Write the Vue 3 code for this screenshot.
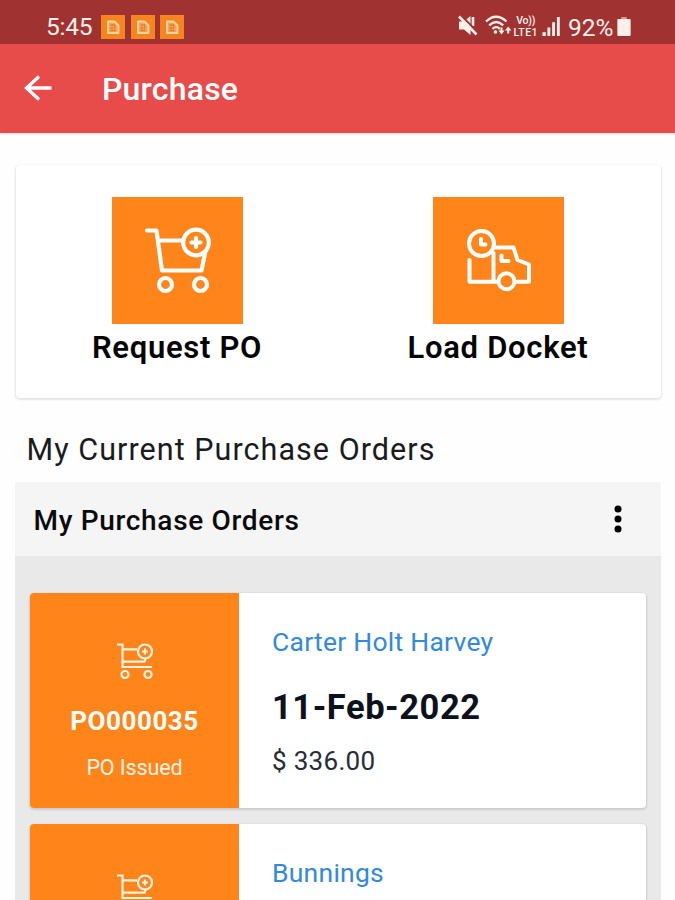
<script setup>
const actions = [
  { label: 'Request PO', icon: 'cart' },
  { label: 'Load Docket', icon: 'truck' },
]
const orders = [
  { number: 'PO000035', status: 'PO Issued', supplier: 'Carter Holt Harvey', date: '11-Feb-2022', amount: '$ 336.00' },
  { number: '', status: '', supplier: 'Bunnings', date: '', amount: '' },
]
</script>

<template>
  <div class="screen">
    <div class="status">
      <span class="clock">5:45</span>
      <div class="notes">
        <svg v-for="n in 3" :key="n" class="note" viewBox="0 0 24 24">
          <rect width="24" height="24" fill="#f5851f" />
          <path d="M7 6.500h6.500l4 4V18H7z" fill="#f5a45c" stroke="#ffd3a0" stroke-width="1.800" stroke-linejoin="round" />
          <path d="M9.500 10h3M9.500 13h2.500M9.500 15.500h5M13.500 9v5" fill="none" stroke="#e97c1c" stroke-width="1.300" />
        </svg>
      </div>
      <div class="system">
        <svg class="mute" viewBox="0 0 20 21">
          <path d="M1 6.500h5L12.500 1v19L6 14.500H1z" fill="#fff0ea" />
          <path d="M15 2v9" stroke="#fff0ea" stroke-width="2.600" />
          <path d="M2.500 0l18 18" stroke="#a13232" stroke-width="2.200" />
          <path d="M1 1.500l17.500 18" stroke="#fff0ea" stroke-width="2.600" />
        </svg>
        <svg class="wifi" viewBox="0 0 27 21">
          <g fill="none" stroke="#fff0ea" stroke-width="2.300">
            <path d="M1 6.500q10-9.500 20.500 0M4.200 10.300q7-6.600 14 0M7.500 13.800q3.700-3.400 7.400 0" />
          </g>
          <circle cx="10.500" cy="17" r="1.800" fill="#fff0ea" />
          <path d="M13.500 15.500h2v-3h2v3h2l-3 4zM20 15.500l3.200-3.900 3.200 3.900h-2.200v3h-2v-3z" fill="#fff0ea" />
        </svg>
        <div class="lte"><span class="vo">Vo))</span><span>LTE1</span></div>
        <svg class="signal" viewBox="0 0 19 20">
          <path d="M0 16h3.500v4H0zM5.200 11h3v9h-3zM10.200 5.500h3V20h-3zM15.200 0h3v20h-3z" fill="#fff0ea" />
        </svg>
        <span class="percent">92%</span>
        <svg class="battery" viewBox="0 0 14 20">
          <path d="M4 0h6v2H4z" fill="#d99a94" /><rect y="2" width="14" height="18" rx="1" fill="#fff0ea" />
        </svg>
      </div>
    </div>

    <header class="bar">
      <svg class="back" viewBox="0 0 28 26">
        <path d="M27.500 13H3M15 1.500L2.500 13 15 24.500" fill="none" stroke="#fff" stroke-width="3.300" />
      </svg>
      <h1>Purchase</h1>
    </header>

    <main>
      <section class="actions">
        <div v-for="a in actions" :key="a.label" class="action">
          <div class="tile">
            <svg v-if="a.icon === 'cart'" viewBox="0 0 131 127">
              <g fill="none" stroke="#fff" stroke-width="4.200" stroke-linecap="round" stroke-linejoin="round">
                <path d="M35 33.500h9.500L50 73.500h39.500L93.500 54M46 43.500h24" />
                <circle cx="84" cy="45.500" r="12.800" />
                <path d="M84 41v9M79.500 45.500h9" />
                <circle cx="53.500" cy="87.500" r="6.500" />
                <circle cx="88.500" cy="87.500" r="6.500" />
              </g>
            </svg>
            <svg v-else viewBox="0 0 131 127">
              <g fill="none" stroke="#fff" stroke-width="4" stroke-linejoin="round" stroke-linecap="round">
                <circle cx="48.500" cy="46.500" r="12.500" />
                <path d="M48 42v5.500h4.500" />
                <path d="M36.500 63v21.800h28M60.500 56v28M61 50.500h19.500L84.500 63l11.500 4.500v17.300H82" />
                <path d="M68.500 58.500v5.500h7" />
                <circle cx="73.500" cy="84.300" r="8" />
              </g>
            </svg>
          </div>
          <span class="label">{{ a.label }}</span>
        </div>
      </section>

      <h2>My Current Purchase Orders</h2>

      <section class="panel">
        <div class="panel-head">
          <h3>My Purchase Orders</h3>
          <svg class="more" viewBox="0 0 8 28">
            <circle cx="4" cy="4" r="3.500" /><circle cx="4" cy="14" r="3.500" /><circle cx="4" cy="24" r="3.500" />
          </svg>
        </div>
        <div class="list">
          <article v-for="o in orders" :key="o.supplier" class="order">
            <div class="badge">
              <svg class="cart" viewBox="0 0 36 36">
                <g fill="none" stroke="#fff3e4" stroke-width="2.200">
                  <path d="M0 1.500h5.500V24H35M6 6.300h14M6 18.700h21.500l1.500-4" />
                  <circle cx="28" cy="8.500" r="7" />
                  <path d="M28 5.500v6M25 8.500h6" />
                  <circle cx="8" cy="31.500" r="3.500" />
                  <circle cx="31" cy="31.500" r="3.500" />
                </g>
              </svg>
              <strong>{{ o.number }}</strong>
              <span class="state">{{ o.status }}</span>
            </div>
            <div class="details">
              <span class="supplier">{{ o.supplier }}</span>
              <span class="date">{{ o.date }}</span>
              <span class="amount">{{ o.amount }}</span>
            </div>
          </article>
        </div>
      </section>
    </main>
  </div>
</template>

<style>
body { margin: 0; overflow: hidden; }
</style>

<style scoped>
.screen { width: 675px; height: 900px; overflow: hidden; background: #fefefe; font-family: Roboto, sans-serif; color: #0b0b0c; white-space: nowrap; }
h1, h2, h3 { margin: 0; }
svg { display: block; flex: none; }
.status { height: 44px; box-sizing: border-box; padding: 9px 44.500px 0 46px; display: flex; align-items: flex-start; background: #a13232; color: #fff0ea; }
.clock { width: 55px; font-size: 24.500px; letter-spacing: -.2px; line-height: 36px; }
.notes { display: flex; gap: 5.500px; padding-top: 5.500px; }
.note { width: 24px; height: 24px; }
.system { margin-left: auto; display: flex; align-items: flex-start; }
.mute { width: 20px; height: 21px; margin: 6px 7px 0 0; }
.wifi { width: 27px; height: 21px; margin: 6px 1.500px 0 0; }
.lte { width: 25.500px; margin-right: 3.500px; padding-top: 6px; display: flex; flex-direction: column; align-items: center; font-size: 10.500px; line-height: 12px; font-weight: 500; letter-spacing: .5px; }
.vo { letter-spacing: -.2px; }
.signal { width: 19px; height: 19px; margin-top: 8px; }
.percent { width: 48.500px; margin-left: 7px; font-size: 24.500px; line-height: 37px; }
.battery { width: 14px; height: 19px; margin-top: 7.500px; }
.bar { height: 88.500px; box-sizing: border-box; display: flex; align-items: center; padding: 2px 0 0 24px; background: #e74c4a; color: #fff; box-shadow: 0 1px 2px rgba(0, 0, 0, .15); }
.back { width: 28px; height: 26px; margin-top: -2px; }
h1 { margin-left: 50px; font-size: 32px; font-weight: 500; line-height: 40px; letter-spacing: .2px; }
main { padding: 32px 14px 0 15px; }
.actions { height: 233.500px; margin: 0 0 0 1px; box-sizing: border-box; padding: 32px 2px 0 0; display: grid; grid-template-columns: 322px 320px; border-radius: 4px; background: #fff; box-shadow: 0 1px 2px 1px rgba(0, 0, 0, .1); }
.action { display: flex; flex-direction: column; align-items: center; }
.tile { width: 131px; height: 127px; background: #ff8419; }
.label { font-size: 31px; font-weight: 600; line-height: 47px; color: #050505; letter-spacing: .7px; }
h2 { margin: 28px 0 0 11.500px; height: 56px; line-height: 48px; font-size: 30.500px; font-weight: 400; letter-spacing: 1.050px; color: #1b1b1d; }
.panel { height: 500px; border-radius: 4px 4px 0 0; overflow: hidden; background: #e9e9e9; }
.panel-head { height: 74px; box-sizing: border-box; padding: 0 39px 0 18.500px; display: flex; align-items: center; justify-content: space-between; background: #f5f5f5; }
h3 { padding-top: 3px; font-size: 28px; font-weight: 500; line-height: 40px; letter-spacing: .680px; }
.more { width: 8px; height: 28px; }
.list { padding: 37px 15px 0; display: grid; gap: 16.500px; }
.order { height: 214.500px; display: flex; border-radius: 4px; background: #fff; box-shadow: 0 1px 2px 1px rgba(0, 0, 0, .13); }
.badge { width: 209px; box-sizing: border-box; padding-top: 50px; display: flex; flex-direction: column; align-items: center; background: #ff8419; border-radius: 4px 0 0 4px; color: #fff3e4; }
.cart { width: 36px; height: 36px; }
strong { margin-top: 26px; line-height: 32px; font-size: 26px; font-weight: 700; color: #fff; letter-spacing: .550px; }
.state { margin-top: 16px; line-height: 30px; font-size: 21.500px; letter-spacing: -.100px; }
.details { padding: 29px 0 0 33px; display: flex; flex-direction: column; align-items: flex-start; }
.supplier { line-height: 40px; font-size: 26.500px; letter-spacing: .250px; color: #3189e0; }
.date { margin-top: 21px; line-height: 48px; font-size: 34.500px; font-weight: 700; letter-spacing: .550px; color: #0c111c; }
.amount { margin-top: 10px; line-height: 40px; font-size: 26px; letter-spacing: .300px; color: #272c36; }
</style>
